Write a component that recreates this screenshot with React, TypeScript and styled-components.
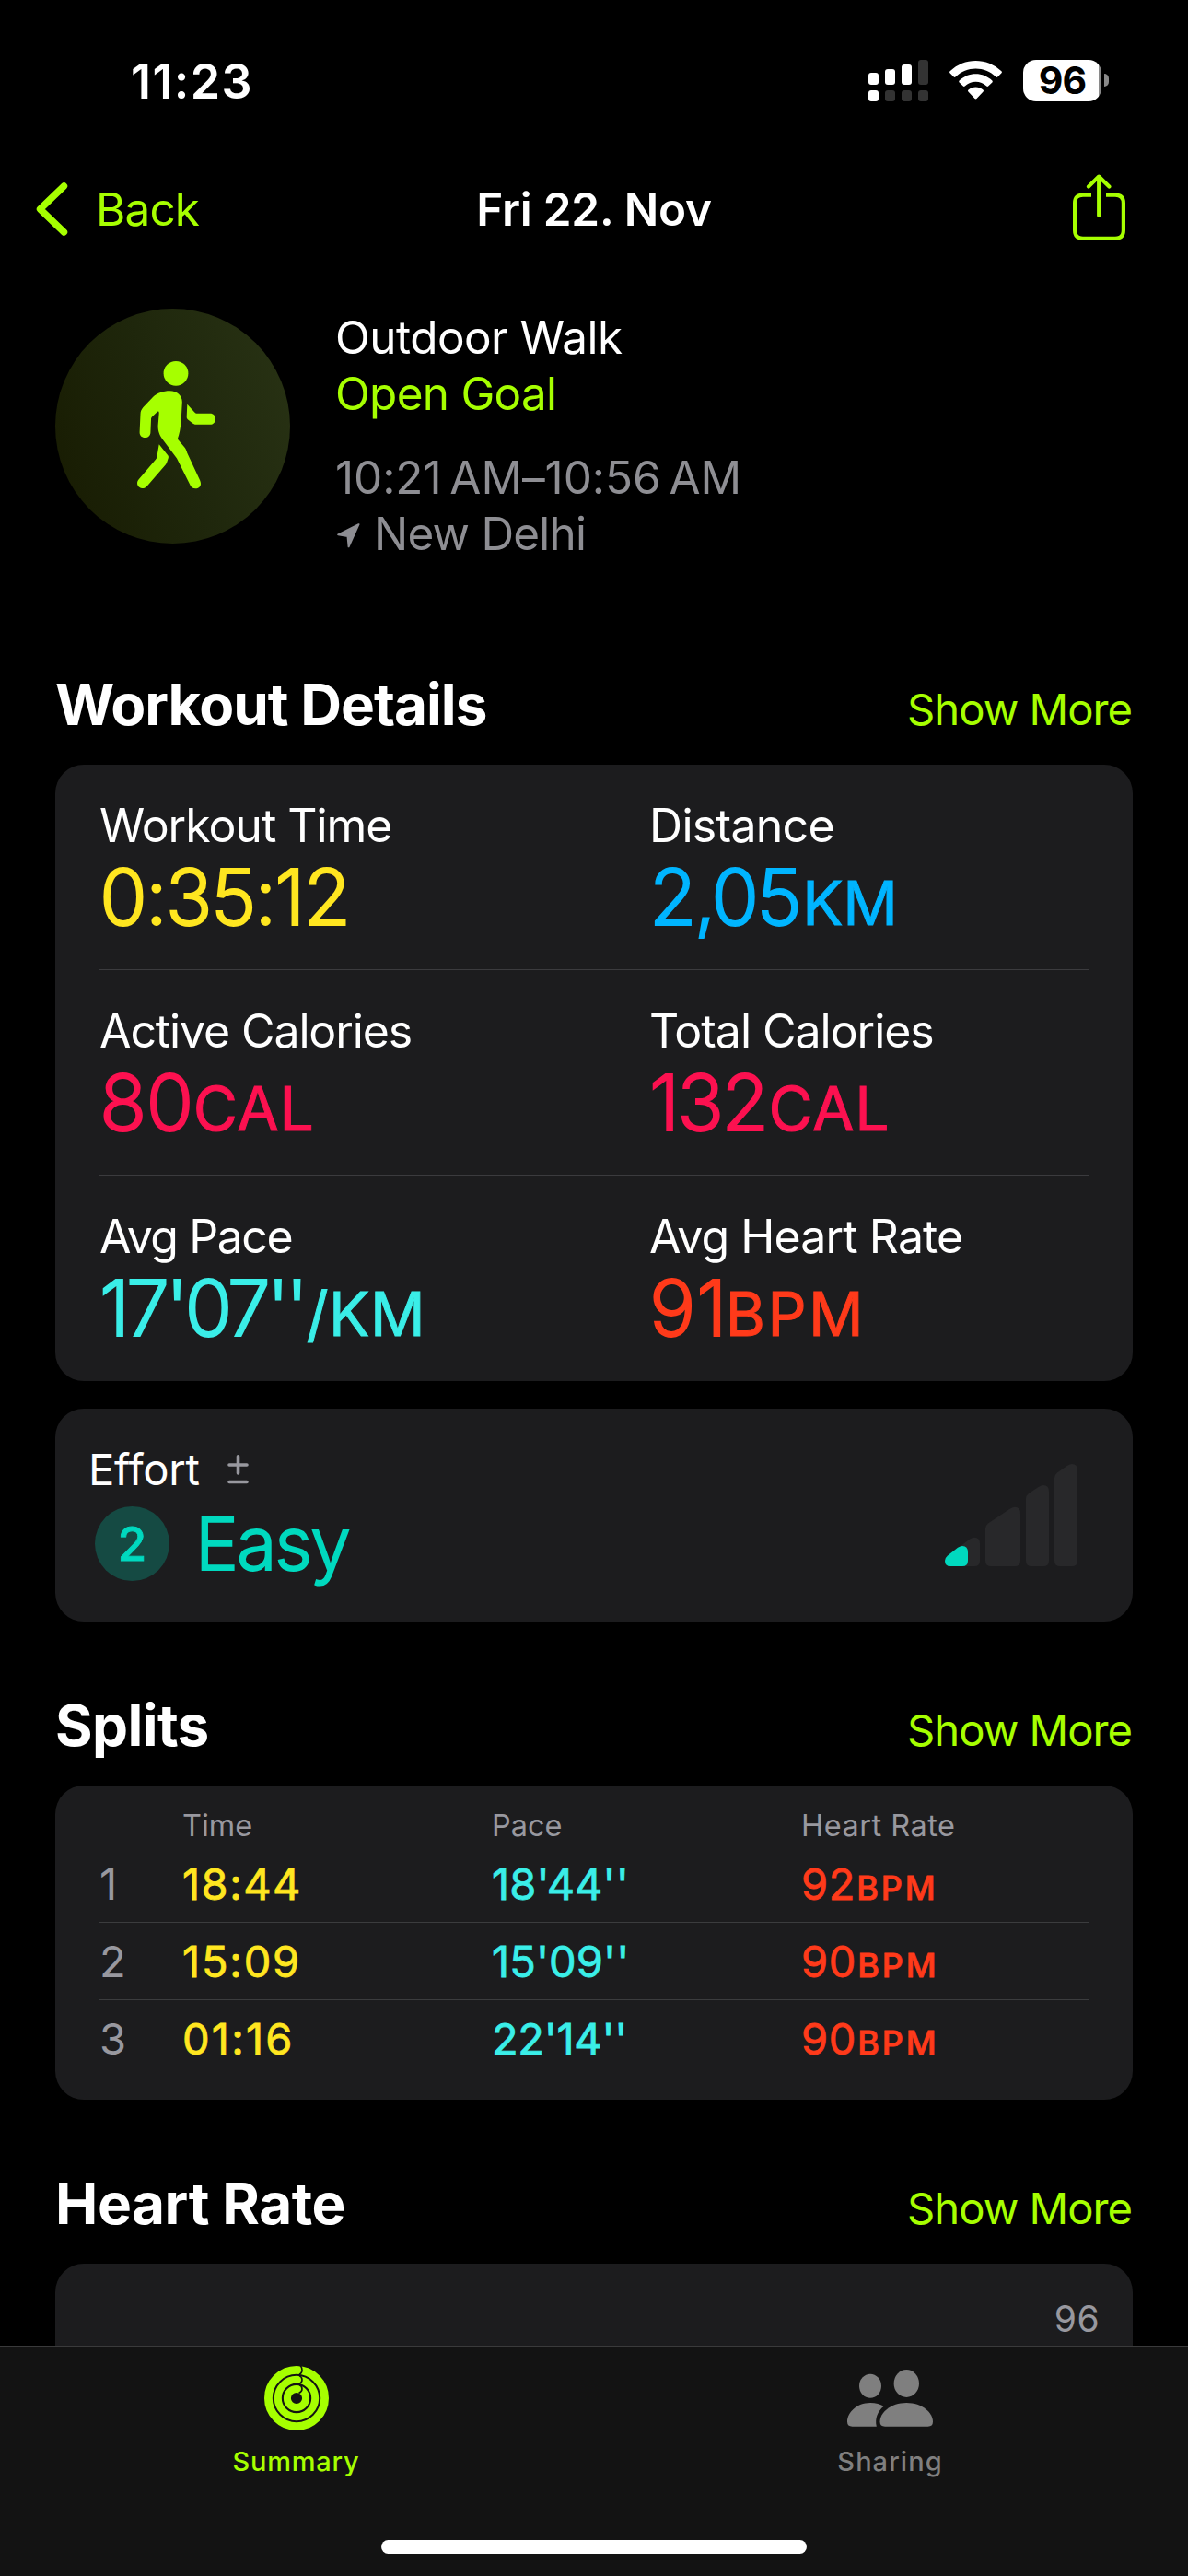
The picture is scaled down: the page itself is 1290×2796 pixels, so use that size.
import React from 'react';
import styled, { createGlobalStyle } from 'styled-components';

const LIME = '#a6ff00';
const YELLOW = '#ffe620';
const BLUE = '#00b5ff';
const PINK = '#fc1150';
const CYAN = '#3aeee8';
const RED = '#ff3a1a';
const TEAL = '#00d9bf';
const GREY = '#98989f';

const GlobalStyle = createGlobalStyle`
  * { box-sizing: border-box; }
  body { margin: 0; background: #000; }
  svg { display: block; flex: none; }
`;

const Screen = styled.div`
  width: 1290px;
  height: 2796px;
  display: flex;
  flex-direction: column;
  overflow: hidden;
  background: #000;
  color: #fff;
  font-family: Inter, "Liberation Sans", sans-serif;
  font-weight: 400;
  white-space: pre;
`;

const StatusBar = styled.header`
  height: 174px;
  flex: none;
  display: flex;
  align-items: center;
  justify-content: space-between;
  padding: 0 86px 0 142px;
`;

const Clock = styled.span`
  padding-top: 2px;
  font-size: 52px;
  font-weight: 600;
  letter-spacing: 1.39px;
`;

const StatusIcons = styled.div`
  display: flex;
  align-items: center;
  gap: 23px;
`;

const Battery = styled.div`
  display: flex;
  align-items: center;
  gap: 3px;
`;

const BatteryBody = styled.div`
  width: 85px;
  height: 45px;
  border-radius: 14px;
  display: flex;
  align-items: center;
  justify-content: center;
  background: linear-gradient(90deg, #fff 82px, #8a8a8a 82px);
  color: #000;
  font-size: 41px;
  line-height: 45px;
  font-weight: 700;
  letter-spacing: -1px;
`;

const BatteryNub = styled.div`
  width: 5px;
  height: 14px;
  border-radius: 0 5px 5px 0;
  background: #8a8a8a;
`;

const NavBar = styled.nav`
  height: 106px;
  flex: none;
  display: grid;
  grid-template-columns: 1fr auto 1fr;
  align-items: center;
  padding: 0 68px 0 39px;
  font-size: 49.4px;
  line-height: 60px;
`;

const BackButton = styled.div`
  display: flex;
  align-items: center;
  gap: 30px;
  color: ${LIME};
  letter-spacing: -0.8px;
`;

const NavTitle = styled.div`
  padding-left: 29px;
  font-weight: 600;
  letter-spacing: -0.2px;
`;

const ShareButton = styled.div`
  justify-self: end;
  padding-bottom: 4px;
`;

const Content = styled.main`
  flex: 1;
  min-height: 0;
  overflow: hidden;
  padding: 0 60px;
`;

const Hero = styled.section`
  height: 446px;
  padding-top: 55px;
  display: flex;
  gap: 49px;
`;

const HeroBadge = styled.div`
  width: 255px;
  height: 255px;
  border-radius: 50%;
  background: linear-gradient(70deg, #181c02 5%, #1f270c 50%, #283214 95%);
`;

const HeroText = styled.div`
  padding-top: 1px;
`;

const HeroLine = styled.div<{ $color?: string; $ls: number; $gap?: number }>`
  display: flex;
  align-items: center;
  height: 61px;
  margin-top: ${(p) => p.$gap ?? 0}px;
  font-size: 49.4px;
  line-height: 61px;
  color: ${(p) => p.$color ?? '#fff'};
  letter-spacing: ${(p) => p.$ls}px;
`;

const PinBox = styled.span`
  padding: 3px 15px 0 2px;
`;

const SectionHeader = styled.div`
  height: 104px;
  padding-top: 1px;
  display: flex;
  align-items: baseline;
  justify-content: space-between;
`;

const SectionTitle = styled.h2<{ $ls: number }>`
  margin: 0;
  font-size: 62px;
  line-height: 76px;
  font-weight: 700;
  letter-spacing: ${(p) => p.$ls}px;
`;

const ShowMore = styled.a`
  padding-right: 1px;
  color: ${LIME};
  font-size: 47.2px;
  line-height: 58px;
  letter-spacing: -1px;
`;

const Card = styled.section<{ $after?: number }>`
  border-radius: 31px;
  background: #1c1c1e;
  margin-bottom: ${(p) => p.$after ?? 0}px;
`;

const DetailsCard = styled(Card)`
  padding: 0 48px;
`;

const DetailRow = styled.div`
  height: 223px;
  display: grid;
  grid-template-columns: 597px 1fr;
  padding-top: 36px;
  &:not(:last-child) { border-bottom: 1px solid #3b3b3e; }
`;

const MetricLabel = styled.div<{ $ls: number }>`
  font-size: 50px;
  line-height: 60px;
  letter-spacing: ${(p) => p.$ls}px;
`;

const MetricValue = styled.div<{ $color: string; $ls: number }>`
  margin-top: 3px;
  font-size: 84px;
  line-height: 90px;
  font-weight: 300;
  -webkit-text-stroke: 1.8px ${(p) => p.$color};
  color: ${(p) => p.$color};
  letter-spacing: ${(p) => p.$ls}px;
`;

const MetricUnit = styled.span<{ $ls: number; $shift: number }>`
  margin-left: ${(p) => p.$shift}px;
  font-size: 66px;
  line-height: 60px;
  font-weight: 400;
  -webkit-text-stroke-width: 1px;
  letter-spacing: ${(p) => p.$ls}px;
`;

const EffortCard = styled(Card)`
  height: 231px;
  display: flex;
  align-items: center;
  justify-content: space-between;
  padding: 0 60px 0 36px;
`;

const EffortInfo = styled.div`
  align-self: flex-start;
  padding-top: 37px;
`;

const EffortLabel = styled.div`
  display: flex;
  align-items: center;
  gap: 30px;
  height: 58px;
  font-size: 47.2px;
  line-height: 58px;
  letter-spacing: -0.25px;
`;

const EffortReading = styled.div`
  display: flex;
  align-items: center;
  gap: 28px;
  height: 81px;
  margin: 11px 0 0 7px;
  color: ${TEAL};
`;

const EffortScore = styled.span`
  width: 81px;
  height: 81px;
  border-radius: 50%;
  display: flex;
  align-items: center;
  justify-content: center;
  background: #154a43;
  font-size: 51px;
  font-weight: 500;
  -webkit-text-stroke: 0.8px ${TEAL};
`;

const EffortName = styled.span`
  font-size: 79px;
  line-height: 81px;
  font-weight: 300;
  -webkit-text-stroke: 1.8px ${TEAL};
  letter-spacing: -2.1px;
`;

const SplitsCard = styled(Card)`
  height: 341px;
  padding: 24px 48px 0;
`;

const SplitGrid = styled.div`
  display: grid;
  grid-template-columns: 90px 336px 336px 1fr;
  align-items: center;
`;

const SplitHead = styled(SplitGrid)`
  height: 41px;
  font-size: 32.5px;
  line-height: 40px;
  padding-bottom: 1px;
  color: ${GREY};
`;

const HeadCell = styled.span<{ $ls?: number }>`
  letter-spacing: ${(p) => p.$ls ?? 0}px;
`;

const SplitRow = styled(SplitGrid)`
  height: 84px;
  font-size: 47px;
  &:not(:last-child) { border-bottom: 1px solid #3b3c3e; }
  &:last-child { padding-bottom: 1px; }
`;

const SplitCell = styled.span<{ $color: string; $ls?: number; $plain?: boolean }>`
  color: ${(p) => p.$color};
  -webkit-text-stroke: ${(p) => (p.$plain ? 0 : 0.8)}px ${(p) => p.$color};
  letter-spacing: ${(p) => p.$ls ?? 0}px;
`;

const SplitUnit = styled.span`
  margin-left: 1px;
  font-size: 36px;
  font-weight: 500;
  letter-spacing: 2.9px;
`;

const ChartCard = styled(Card)`
  height: 400px;
  display: flex;
  justify-content: flex-end;
  padding: 36px 36px 0;
`;

const AxisLabel = styled.span`
  font-size: 39px;
  line-height: 48px;
  letter-spacing: 0.4px;
  color: ${GREY};
`;

const TabBar = styled.footer`
  height: 250px;
  flex: none;
  display: flex;
  flex-direction: column;
  align-items: center;
  border-top: 1px solid #3a3a3b;
  background: #131313;
`;

const Tabs = styled.div`
  width: 100%;
  display: grid;
  grid-template-columns: 1fr 1fr;
  padding-top: 21px;
`;

const Tab = styled.div<{ $color: string; $ls: number }>`
  display: flex;
  flex-direction: column;
  align-items: center;
  gap: 16px;
  padding-right: 2px;
  color: ${(p) => p.$color};
  font-size: 29px;
  line-height: 36px;
  font-weight: 500;
  letter-spacing: ${(p) => p.$ls}px;
`;

const HomeIndicator = styled.div`
  width: 462px;
  height: 15px;
  margin: auto 0 24px;
  border-radius: 8px;
  background: #fff;
`;

const SignalIcon = () => (
  <svg width="65" height="45" viewBox="0 0 65 45" fill="#fff">
    <rect x="0" y="14" width="11" height="13" rx="3" />
    <rect x="18" y="10" width="11" height="17" rx="3" />
    <rect x="36" y="5" width="11" height="22" rx="3" />
    <rect x="54" y="0" width="11" height="27" rx="3" fill="#333" />
    <rect x="0" y="33" width="11" height="12" rx="3" />
    <rect x="18" y="33" width="11" height="12" rx="3" fill="#333" />
    <rect x="36" y="33" width="11" height="12" rx="3" fill="#333" />
    <rect x="54" y="33" width="11" height="12" rx="3" fill="#333" />
  </svg>
);

const WifiIcon = () => (
  <svg width="57" height="42" viewBox="0 0 57 42" fill="#fff">
    <path d="M.6 11.3C8.6 3.8 18.200 0 28.500 0S48.400 3.800 56.400 11.300Q57.400 12.300 56.500 13.300L52.300 17.500Q51.400 18.300 50.500 17.500C44.300 11.600 36.500 8.500 28.500 8.500S12.700 11.600 6.500 17.500Q5.600 18.300 4.700 17.500L.5 13.300Q-.4 12.300.6 11.300Z" />
    <path d="M10.600 21.500C15.600 16.700 21.800 14.200 28.500 14.200S41.400 16.700 46.400 21.500Q47.300 22.500 46.400 23.400L42.100 27.600Q41.200 28.300 40.300 27.600C37.100 24.400 32.900 22.700 28.500 22.700S19.900 24.400 16.700 27.600Q15.800 28.300 14.900 27.600L10.600 23.400Q9.700 22.500 10.600 21.500Z" />
    <path d="M20.500 31.400C22.800 29.500 25.600 28.400 28.500 28.400S34.200 29.500 36.500 31.400Q37.600 32.400 36.600 33.400L29.500 41Q28.500 41.900 27.500 41L20.400 33.400Q19.400 32.400 20.500 31.400Z" />
  </svg>
);

const ChevronIcon = () => (
  <svg width="35" height="58" viewBox="0 0 35 58" fill="none" stroke={LIME} strokeWidth="7.400" strokeLinecap="round" strokeLinejoin="round">
    <path d="M30.500 4L4.500 29L30.500 54" />
  </svg>
);

const ShareIcon = () => (
  <svg width="57" height="72" viewBox="0 0 57 72" fill="none" stroke={LIME} strokeWidth="4.200">
    <path d="M20 22.600H11Q2.100 22.600 2.100 31.500V61Q2.100 69.900 11 69.900H46Q54.900 69.900 54.900 61V31.500Q54.900 22.600 46 22.600H36" />
    <path d="M28.200 45V3M17 13.500L28.200 2.600L39.400 13.500" strokeLinecap="round" strokeLinejoin="round" />
  </svg>
);

const WalkerIcon = () => (
  <svg width="255" height="255" viewBox="0 0 255 255" fill={LIME}>
    <circle cx="131" cy="70.300" r="13.400" />
    <path d="M124.400 89.300C132.500 89.300 137.900 94.500 137.800 101.500L136.600 122C136 130 134.800 136 132.800 141.500L140.800 151C142 152.800 142.600 154.500 143.200 156.500L157.200 186.500C159.500 192 156.500 195.300 152.300 195.300C149.500 195.300 147.300 193.800 146 190.500L132 162.500L117 142.500C113 137 111.500 133 111.600 127L112.700 113.500C112.700 111.300 111.700 111.200 110.500 112.200L105 117.500C104.200 118.400 104 119.200 104 120.500L103.400 134.500C103.200 138 101 140 97.400 140C93.700 140 91.500 137.500 91.600 134L92.500 114.500C92.600 111.500 93.500 109.500 95.300 107.300L106 96C111 91.500 117 89.300 124.400 89.300Z" />
    <path d="M143.300 103.700L151.300 112.400C152 113.300 152.800 113.700 154 113.700H168C171.800 113.700 174 116.200 174 119.700S171.800 125.800 168 125.800H153C151.200 125.800 149.800 125.200 148.600 124L143.800 120.200C143 119.400 142.700 118.700 142.700 117.600Z" />
    <path d="M112.700 147.300L122.300 159.300C123 160.200 123 161 122.800 162L121.300 166.500C121 167.600 120.500 168.500 119.700 169.500L99.800 192.500C97.500 195.200 93.800 196 91.200 193.800C88.500 191.500 88.300 188 90.700 185.200L109 163.800C109.800 162.800 110.200 162 110.400 160.700Z" />
  </svg>
);

const LocationIcon = () => (
  <svg width="25" height="27" viewBox="0 0 25 27" fill="#8e8e93" stroke="#8e8e93" strokeWidth="2" strokeLinejoin="round">
    <path d="M23.500 1.200L1.200 12.300L11.500 14L12.600 25.300Z" />
  </svg>
);

const PlusMinusIcon = () => (
  <svg width="23" height="32" viewBox="0 0 23 32" fill="none" stroke={GREY} strokeWidth="3.600" strokeLinecap="round">
    <path d="M11.500 1.800V20M2 11H21M2 29.500H21" />
  </svg>
);

const bar = (x: number, x2: number, left: number, apex: number, top: number) =>
  `M${x} 105V${left + 3}Q${x} ${left} ${x + 3} ${left - 2.500}L${apex - 4} ${top + 1.800}Q${apex - 1} ${top} ${apex + 1} ${top}Q${x2} ${top} ${x2} ${top + 7}V105Q${x2} 111 ${x2 - 6} 111H${x + 6}Q${x} 111 ${x} 105Z`;

const EffortBars = () => (
  <svg width="144" height="111" viewBox="0 0 144 111" fill="#28282a">
    <path d={bar(0, 38, 102.500, 31, 79.700)} />
    <path d={bar(44, 82, 67, 75, 46.700)} />
    <path d={bar(88, 113, 34.500, 106, 23)} />
    <path d={bar(119, 144, 12, 137, 0)} />
    <path fill={TEAL} d={bar(0, 25, 102, 18, 89)} />
  </svg>
);

const RingsIcon = () => (
  <svg width="70" height="70" viewBox="0 0 70 70" fill="none">
    <g stroke={LIME}>
      <circle cx="35" cy="35" r="30.600" strokeWidth="8.800" />
      <circle cx="35" cy="35" r="20.200" strokeWidth="8" />
      <circle cx="35" cy="35" r="10.100" strokeWidth="8" />
    </g>
    <g stroke="#131313" strokeWidth="1.600">
      <path d="M39 -.5Q41 1.500 41 4.500T38 9.500" />
      <path d="M38 10.500Q41 12 41 15T38 19.500" />
      <path d="M38 20.500Q41 22 41 25T37.500 29.500" />
    </g>
  </svg>
);

const PeopleIcon = () => (
  <svg width="93" height="70" viewBox="0 0 93 70" fill="#7f7f7f">
    <ellipse cx="25" cy="21.700" rx="12" ry="13" />
    <ellipse cx="64.300" cy="19" rx="13.700" ry="15" />
    <path d="M5.500 65.700Q0 65.700 0 60.500C0 51 10 40 25 40C31 40 36 41.500 39.700 43.700C33 49 29.800 57 31.800 65.700Z" />
    <path d="M41 65.700Q35.500 65.700 35.500 60.500C35.500 51 47 40 64.300 40S93 51 93 60.500Q93 65.700 87.500 65.700Z" />
  </svg>
);

type Metric = { label: string; labelLs: number; value: string; ls: number; unit?: string; unitLs?: number; shift?: number; color: string };

const details: Metric[][] = [
  [
    { label: 'Workout Time', labelLs: -1.05, value: '0:35:12', ls: -1.95, color: YELLOW },
    { label: 'Distance', labelLs: -0.7, value: '2,05', ls: -2.9, unit: 'KM', unitLs: -0.4, shift: 3, color: BLUE },
  ],
  [
    { label: 'Active Calories', labelLs: -1.12, value: '80', ls: -0.8, unit: 'CAL', unitLs: 0.7, shift: 0, color: PINK },
    { label: 'Total Calories', labelLs: -1.03, value: '132', ls: -2.7, unit: 'CAL', unitLs: 0.7, shift: 2, color: PINK },
  ],
  [
    { label: 'Avg Pace', labelLs: -1.45, value: "17'07''", ls: -4, unit: '/KM', unitLs: 0.5, shift: 2, color: CYAN },
    { label: 'Avg Heart Rate', labelLs: -0.9, value: '91', ls: 0.6, unit: 'BPM', unitLs: 2.4, shift: -2, color: RED },
  ],
];

const splits = [
  { n: '1', time: '18:44', timeLs: 1.5, pace: "18'44''", paceLs: 0.1, bpm: '92' },
  { n: '2', time: '15:09', timeLs: 1.8, pace: "15'09''", paceLs: 0.1, bpm: '90' },
  { n: '3', time: '01:16', timeLs: 2.2, pace: "22'14''", paceLs: -0.3, bpm: '90' },
];

const Section = ({ title, ls }: { title: string; ls: number }) => (
  <SectionHeader>
    <SectionTitle $ls={ls}>{title}</SectionTitle>
    <ShowMore>Show More</ShowMore>
  </SectionHeader>
);

export default function App() {
  return (
    <>
      <GlobalStyle />
      <Screen>
        <StatusBar>
          <Clock>11:23</Clock>
          <StatusIcons>
            <SignalIcon />
            <WifiIcon />
            <Battery>
              <BatteryBody>96</BatteryBody>
              <BatteryNub />
            </Battery>
          </StatusIcons>
        </StatusBar>
        <NavBar>
          <BackButton>
            <ChevronIcon />
            <span>Back</span>
          </BackButton>
          <NavTitle>Fri 22. Nov</NavTitle>
          <ShareButton>
            <ShareIcon />
          </ShareButton>
        </NavBar>
        <Content>
          <Hero>
            <HeroBadge>
              <WalkerIcon />
            </HeroBadge>
            <HeroText>
              <HeroLine $ls={-0.5}>Outdoor Walk</HeroLine>
              <HeroLine $ls={-0.69} $color={LIME}>Open Goal</HeroLine>
              <HeroLine $ls={-0.05} $color="#8e8e93" $gap={30}>{'10:21\u202fAM–10:56\u202fAM'}</HeroLine>
              <HeroLine $ls={-0.75} $color="#8e8e93">
                <PinBox>
                  <LocationIcon />
                </PinBox>
                New Delhi
              </HeroLine>
            </HeroText>
          </Hero>

          <Section title="Workout Details" ls={-0.98} />
          <DetailsCard $after={30}>
            {details.map((row) => (
              <DetailRow key={row[0].label}>
                {row.map((m) => (
                  <div key={m.label}>
                    <MetricLabel $ls={m.labelLs}>{m.label}</MetricLabel>
                    <MetricValue $color={m.color} $ls={m.ls}>
                      {m.value}
                      {m.unit && (
                        <MetricUnit $ls={m.unitLs ?? 0} $shift={m.shift ?? 0}>{m.unit}</MetricUnit>
                      )}
                    </MetricValue>
                  </div>
                ))}
              </DetailRow>
            ))}
          </DetailsCard>

          <EffortCard $after={74}>
            <EffortInfo>
              <EffortLabel>
                Effort
                <PlusMinusIcon />
              </EffortLabel>
              <EffortReading>
                <EffortScore>2</EffortScore>
                <EffortName>Easy</EffortName>
              </EffortReading>
            </EffortInfo>
            <EffortBars />
          </EffortCard>

          <Section title="Splits" ls={-0.6} />
          <SplitsCard $after={74}>
            <SplitHead>
              <span />
              <HeadCell>Time</HeadCell>
              <HeadCell>Pace</HeadCell>
              <HeadCell $ls={0.5}>Heart Rate</HeadCell>
            </SplitHead>
            <div>
              {splits.map((s) => (
                <SplitRow key={s.n}>
                  <SplitCell $color={GREY} $plain>{s.n}</SplitCell>
                  <SplitCell $color={YELLOW} $ls={s.timeLs}>{s.time}</SplitCell>
                  <SplitCell $color={CYAN} $ls={s.paceLs}>{s.pace}</SplitCell>
                  <SplitCell $color={RED} $ls={0.7}>
                    {s.bpm}
                    <SplitUnit>BPM</SplitUnit>
                  </SplitCell>
                </SplitRow>
              ))}
            </div>
          </SplitsCard>

          <Section title="Heart Rate" ls={-0.41} />
          <ChartCard>
            <AxisLabel>96</AxisLabel>
          </ChartCard>
        </Content>
        <TabBar>
          <Tabs>
            <Tab $color={LIME} $ls={0.78}>
              <RingsIcon />
              Summary
            </Tab>
            <Tab $color="#7f7f7f" $ls={1.05}>
              <PeopleIcon />
              Sharing
            </Tab>
          </Tabs>
          <HomeIndicator />
        </TabBar>
      </Screen>
    </>
  );
}
